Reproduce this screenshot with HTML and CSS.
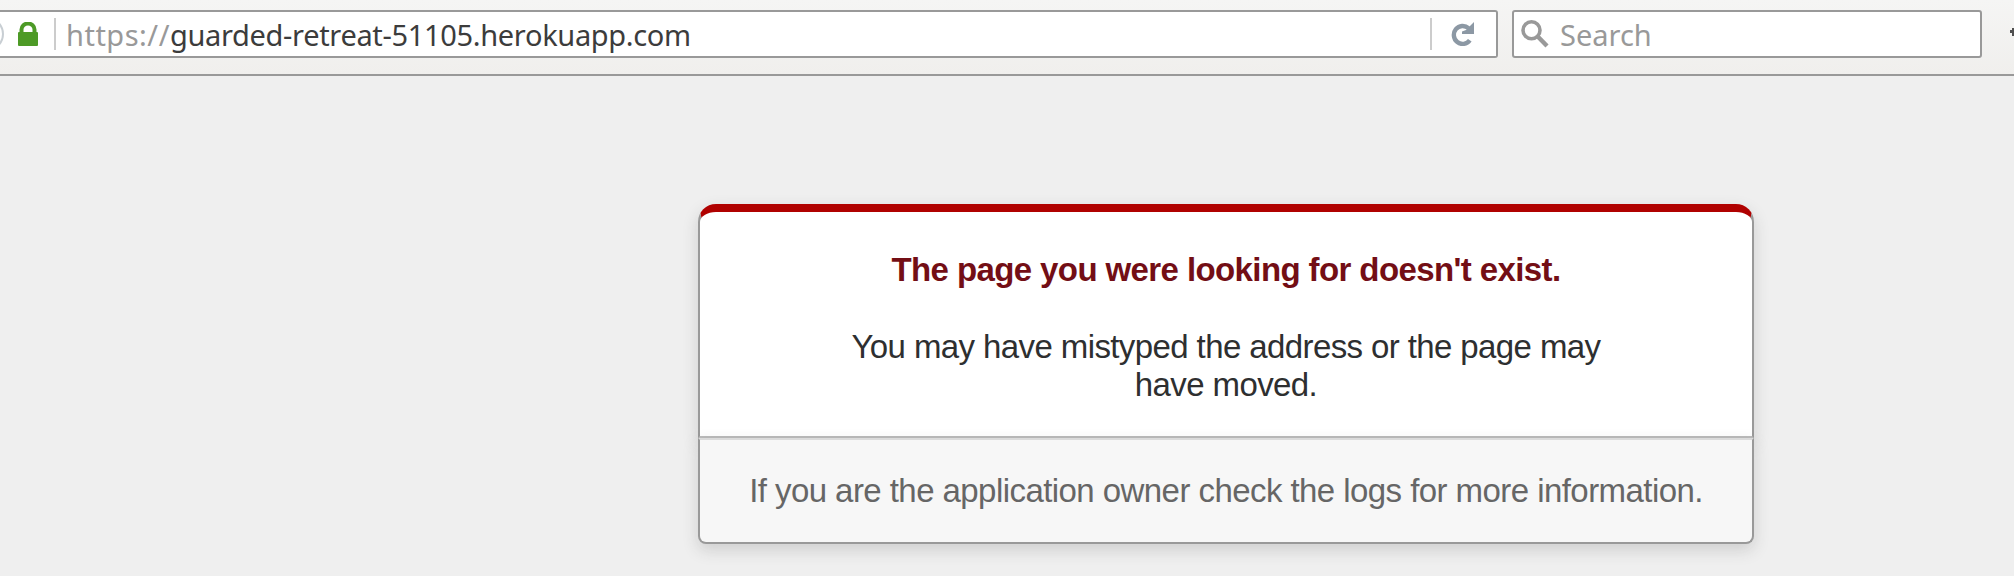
FILE: index.html
```
<!DOCTYPE html>
<html lang="en">
<head>
<meta charset="utf-8">
<title>The page you were looking for doesn't exist</title>
<link rel="stylesheet" href="styles.css">
</head>
<body>
<header class="toolbar">
  <div class="url-bar">
    <svg class="back-edge" width="4" height="32" viewBox="0 0 4 32"><circle cx="-13" cy="16" r="16" fill="none" stroke="#c8ced3" stroke-width="2"/></svg>
    <svg class="lock" width="20" height="24" viewBox="0 0 20 24"><path d="M3.5 12V7.500a6.500 6 0 0 1 13 0V12" fill="none" stroke="#4d9a26" stroke-width="4"/><rect y="10" width="20" height="14" rx="1" fill="#4d9a26"/></svg>
    <span class="divider"></span>
    <div class="url"><span class="scheme">https://</span><span class="host">guarded-retreat-51105.herokuapp.com</span></div>
    <span class="divider"></span>
    <svg class="reload" width="24" height="24" viewBox="0 0 24 24"><path d="M17.500 6.200A8.800 9 0 1 0 18.800 18.200" fill="none" stroke="#8c98a4" stroke-width="4.400"/><path d="M23 0V12H11V9.500L15 8Z" fill="#8c98a4"/></svg>
  </div>
  <div class="search-bar">
    <svg width="28" height="28" viewBox="0 0 28 28"><circle cx="10.500" cy="10.300" r="8.500" fill="none" stroke="#999" stroke-width="3.600"/><path d="M16.500 16.300L26 26" stroke="#999" stroke-width="4.400"/></svg>
    <span class="placeholder">Search</span>
  </div>
  <svg class="overflow" width="4" height="8" viewBox="0 0 4 8"><path d="M0 2H2V0H4V8H2V5H0Z" fill="#505050"/></svg>
</header>
<main class="dialog">
  <div class="message">
    <h1>The page you were looking for doesn't exist.</h1>
    <p>You may have mistyped the address or the page may have moved.</p>
  </div>
  <p class="note">If you are the application owner check the logs for more information.</p>
</main>
</body>
</html>
```
FILE: styles.css
```
* { box-sizing: border-box; }
body {
  margin: 0;
  height: 576px;
  overflow: hidden;
  background: #efefef;
  color: #2e2f30;
  font: 33px/38px "Liberation Sans", Arial, sans-serif;
  letter-spacing: -.6px;
  text-align: center;
}
svg { display: block; flex: none; }
.toolbar {
  display: flex;
  height: 76px;
  padding-top: 10px;
  border-bottom: 2px solid #999;
  background: linear-gradient(#f5f5f4, #f0efed);
  font: 29px/44px "Noto Sans", sans-serif;
  letter-spacing: 0;
  text-align: left;
}
.url-bar, .search-bar {
  display: flex;
  align-items: center;
  height: 48px;
  border: 2px solid #999;
  background: #fff;
}
.url-bar {
  width: 1498px;
  border-left: 0;
  border-radius: 0 3px 3px 0;
}
.lock { margin: 0 16px 0 14px; }
.divider { flex: none; width: 2px; height: 32px; background: #ccc; }
.url { flex: 1; padding: 1px 0 0 10px; white-space: nowrap; color: #3c3c3c; }
.scheme { color: #999; letter-spacing: .5px; }
.host { letter-spacing: -.33px; }
.reload { margin: 0 21px 0 19px; }
.search-bar {
  width: 470px;
  margin-left: 14px;
  padding-left: 7px;
  border-radius: 3px;
}
.placeholder { margin-left: 11px; padding-top: 1px; color: #999; }
.overflow { margin: 18px 0 0 28px; }
.dialog { width: 1056px; margin: 128px 0 0 698px; }
.message {
  padding: 14px 12% 0;
  border: 2px solid #999;
  border-top: 8px solid #b00100;
  border-bottom-color: #bbb;
  border-radius: 18px 18px 0 0;
  background: #fff;
  box-shadow: 0 6px 16px rgba(50, 50, 50, .17);
}
h1 { margin: 20px 0 0; color: #730e15; font-size: 33px; line-height: 48px; }
.message p { margin: 34px 0 32px; }
.note {
  position: relative;
  margin: 0;
  padding: 32px 24px;
  border: 2px solid #999;
  border-top-color: #dadada;
  border-radius: 0 0 8px 8px;
  background: #f7f7f7;
  color: #666;
  letter-spacing: -.56px;
  box-shadow: 0 6px 16px rgba(50, 50, 50, .17);
}
```
